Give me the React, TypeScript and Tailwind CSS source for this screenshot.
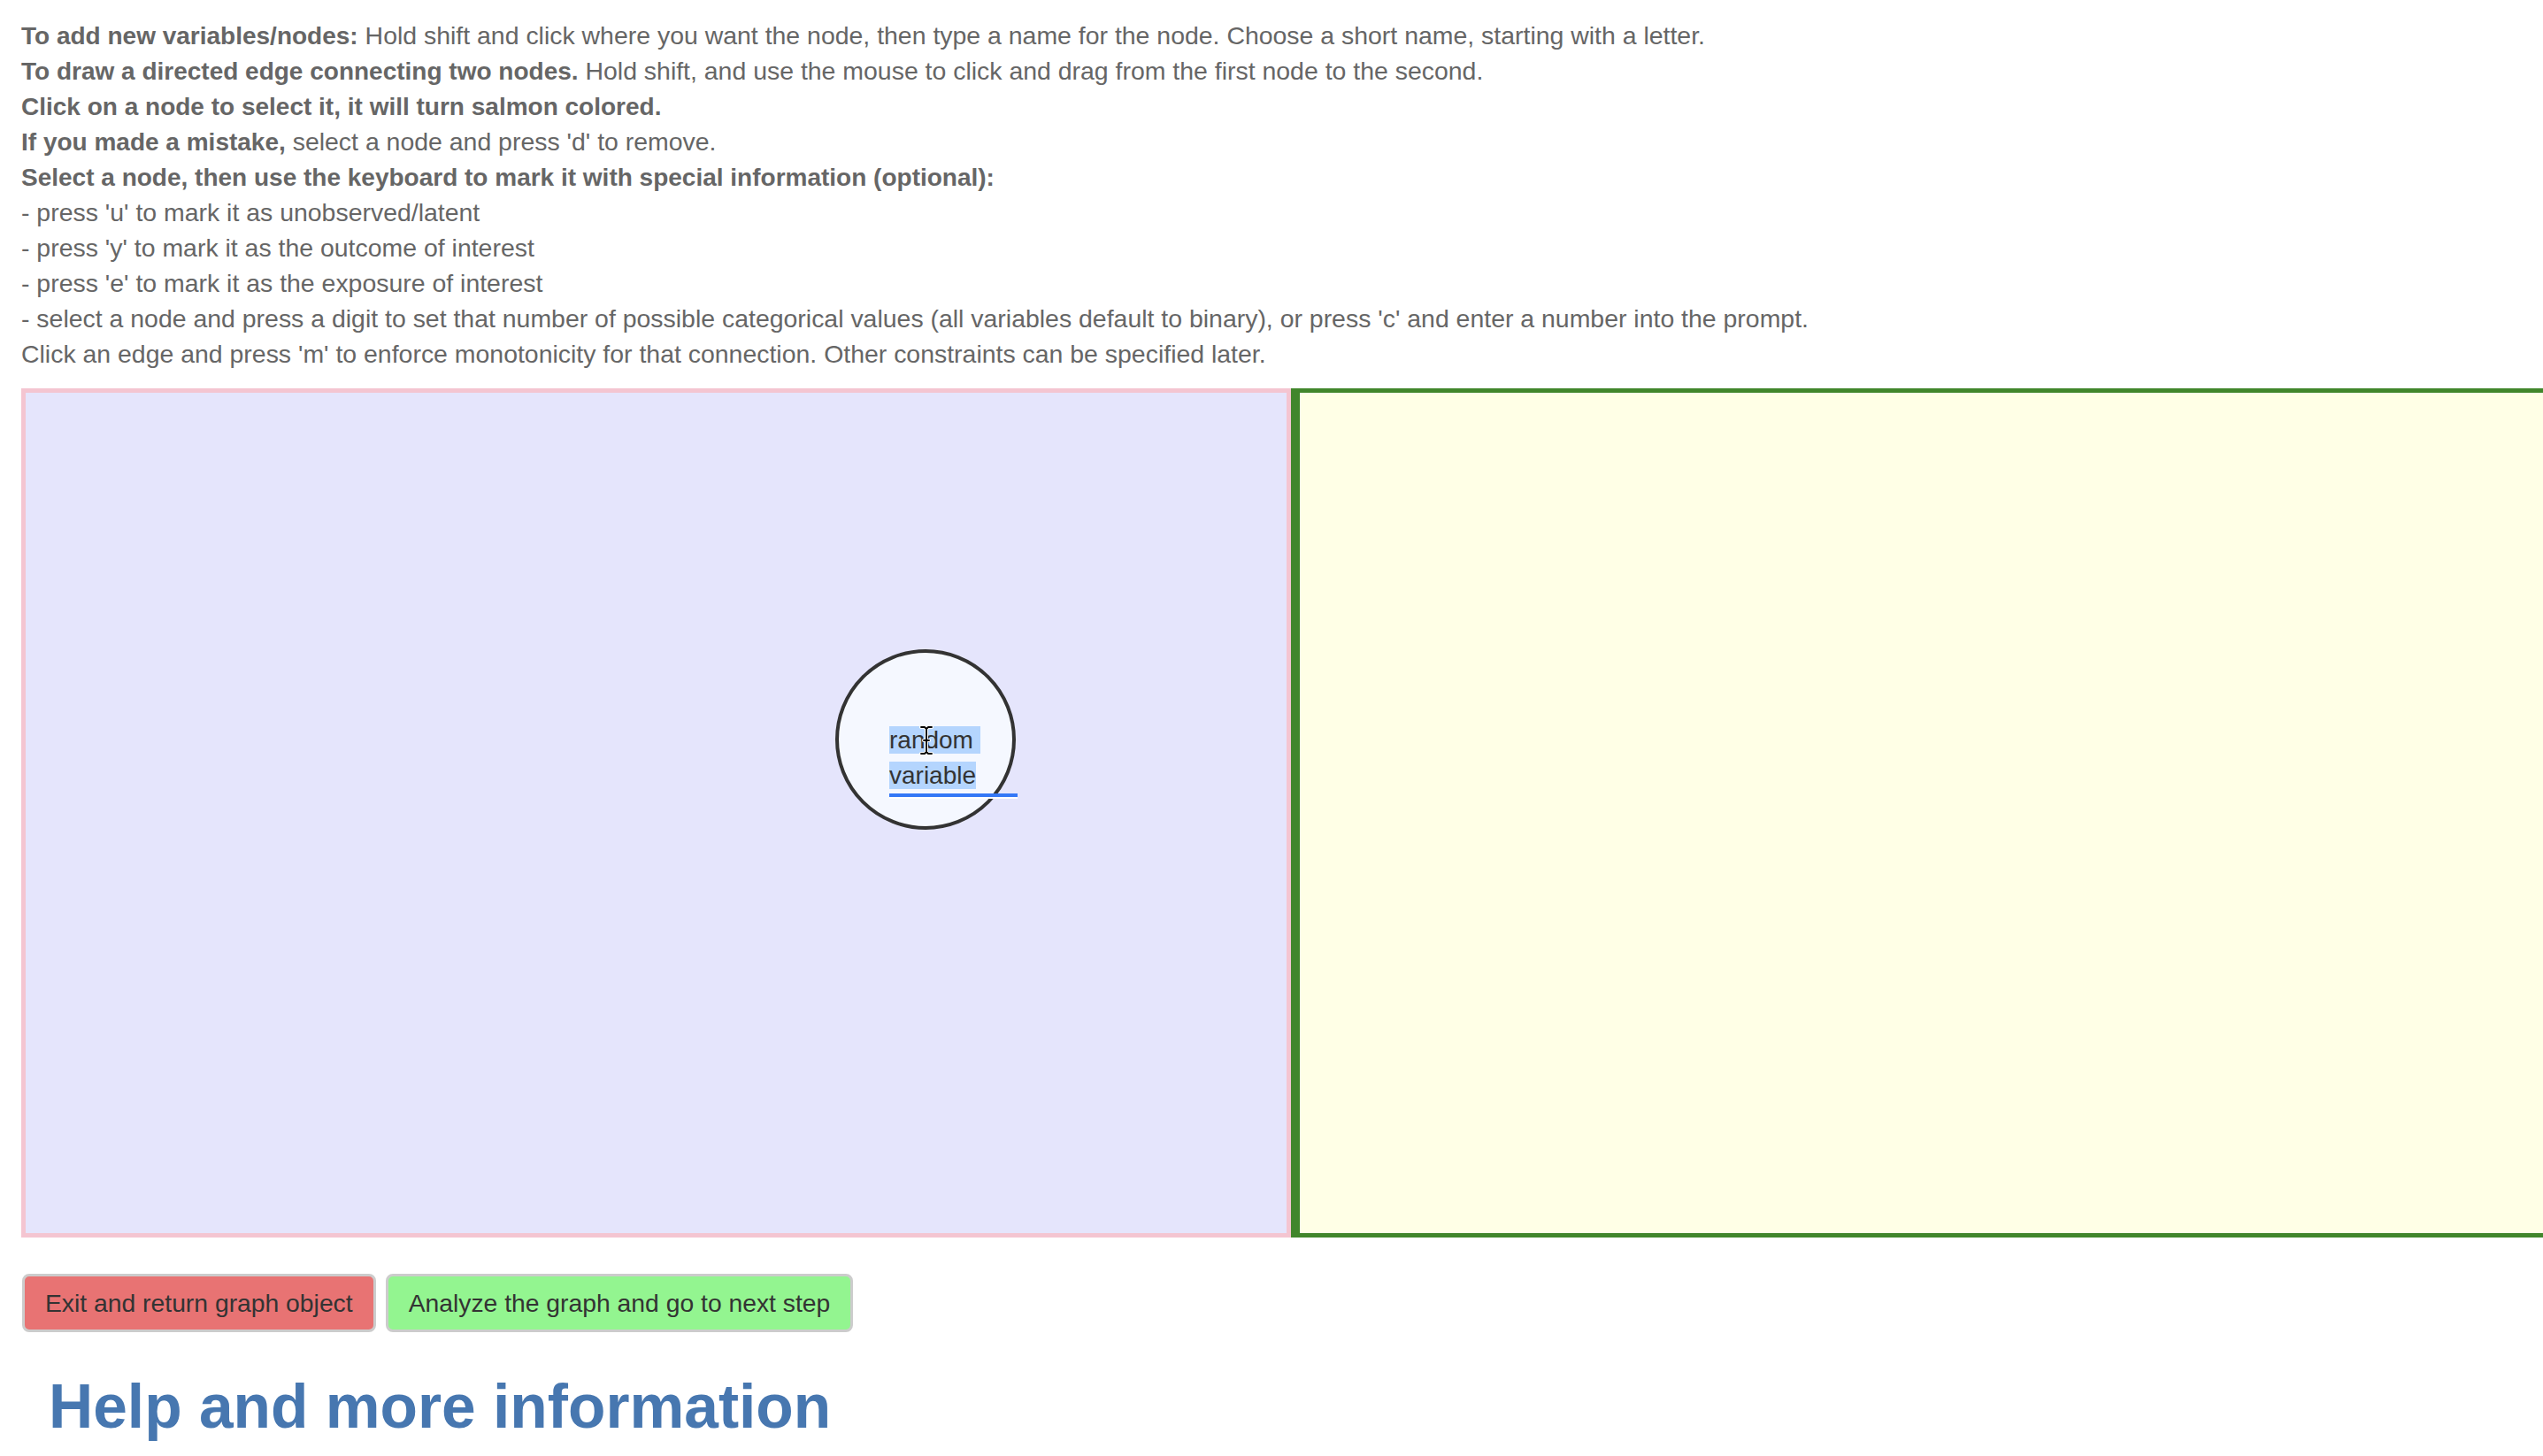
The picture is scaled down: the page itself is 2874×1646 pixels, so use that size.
import React from "react";

export default function App() {
  return (
    <div className="w-[2874px] h-[1646px] overflow-hidden bg-white font-['Liberation_Sans',Arial,sans-serif]">
      <div className="pt-[20px] pl-[24px] text-[28.45px] leading-[40px] text-[#666] [&_b]:text-[28px] [&_b]:leading-[28px] [&>div]:h-[40px]">
        <div>
          <b>To add new variables/nodes:</b> Hold shift and click where you want the node, then type a name for the node. Choose a short name, starting with a letter.
        </div>
        <div>
          <b>To draw a directed edge connecting two nodes.</b> Hold shift, and use the mouse to click and drag from the first node to the second.
        </div>
        <div>
          <b>Click on a node to select it, it will turn salmon colored.</b>
        </div>
        <div>
          <b>If you made a mistake,</b> select a node and press 'd' to remove.
        </div>
        <div>
          <b>Select a node, then use the keyboard to mark it with special information (optional):</b>
        </div>
        <div>- press 'u' to mark it as unobserved/latent</div>
        <div>- press 'y' to mark it as the outcome of interest</div>
        <div>- press 'e' to mark it as the exposure of interest</div>
        <div>
          - select a node and press a digit to set that number of possible categorical values (all variables default to binary), or press 'c' and enter a number into the prompt.
        </div>
        <div>Click an edge and press 'm' to enforce monotonicity for that connection. Other constraints can be specified later.</div>
      </div>

      <div className="mt-[19px] ml-[24px] flex h-[960px]">
        <div className="relative w-[1435px] shrink-0 border-[5px] border-[#f4c5d1] bg-[#e5e5fc]">
          <svg className="absolute left-[915px] top-[290px]" width="204" height="204" viewBox="0 0 204 204">
            <circle cx="102" cy="102" r="100" fill="#f5f8ff" stroke="#333" strokeWidth="4" />
          </svg>
          <div className="absolute left-[976px] top-[373px] w-[145px] border-b-4 border-[#3478f6] shadow-[0_2px_0_white] text-[28px] leading-[40px] text-[#333] whitespace-nowrap">
            <span className="bg-[#b4d5fe]">random&nbsp;</span>
            <br />
            <span className="bg-[#b4d5fe]">variable</span>
          </div>
          <svg className="absolute left-[1010px] top-[376px]" width="16" height="34" viewBox="0 0 16 34">
            <path d="M2 2 H6 L8 4 L10 2 H14 M8 4 V30 M2 32 H6 L8 30 L10 32 H14 M5 17 H11" fill="none" stroke="white" strokeWidth="4" strokeLinecap="round" strokeLinejoin="round" />
            <path d="M2 2 H6 L8 4 L10 2 H14 M8 4 V30 M2 32 H6 L8 30 L10 32 H14 M5 17 H11" fill="none" stroke="black" strokeWidth="1.8" strokeLinecap="round" strokeLinejoin="round" />
          </svg>
        </div>
        <div className="w-[1435px] shrink-0 border-[5px] border-l-[10px] border-[#41862c] bg-[#ffffe6]" />
      </div>

      <div className="mt-[41px] ml-[25px] flex gap-[11px] text-[28.3px] leading-[40px] text-[#333]">
        <button className="rounded-[8px] border-[3px] border-[#ccc] bg-[#e87373] px-[23px] py-[10px]">
          Exit and return graph object
        </button>
        <button className="rounded-[8px] border-[3px] border-[#ccc] bg-[#93f590] px-[23px] py-[10px]">
          Analyze the graph and go to next step
        </button>
      </div>

      <h1 className="mt-[46px] pl-[55px] text-[69.5px] leading-[77px] font-bold text-[#4777b0]">
        Help and more information
      </h1>
    </div>
  );
}
